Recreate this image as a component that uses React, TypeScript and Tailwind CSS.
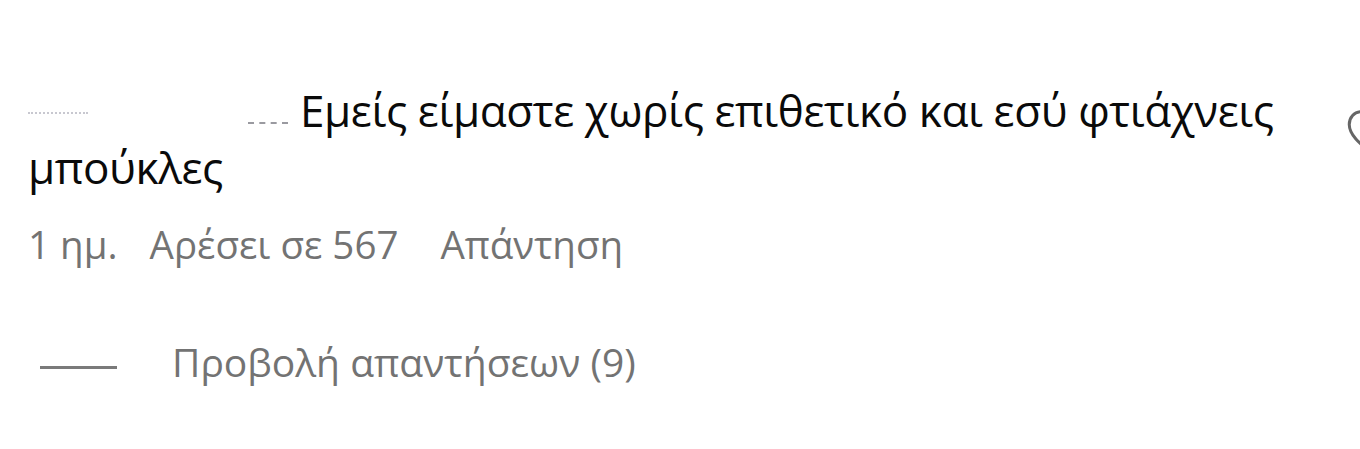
import React from "react";

export default function App() {
  return (
    <div
      className="relative w-[1360px] h-[449px] overflow-hidden bg-white"
      style={{ fontFamily: '"Open Sans", "Noto Sans", sans-serif' }}
    >
      <div className="flex items-start pt-[82px] pl-[28px]">
        <div className="flex-1">
          <div className="text-[44px] leading-[57px] text-[#0a0a0a] tracking-[-0.4px]">
            <span className="inline-flex items-baseline w-[272px] align-baseline">
              <span className="inline-block w-[60px] h-[2px] mr-[160px] border-t-2 border-dotted border-[#c8c8d0] -translate-y-[13px]" />
              <span className="inline-block w-[40px] h-[2px] border-t-2 border-dashed border-[#9a9aa0] translate-y-[-3px]" />
            </span>
            Εμείς είμαστε χωρίς επιθετικό και εσύ φτιάχνεις
            <br />
            μπούκλες
          </div>
          <div className="mt-[23px] flex items-center text-[38.5px] leading-[50px] text-[#737373]">
            <span>1 ημ.</span>
            <span className="ml-[32px]">Αρέσει σε 567</span>
            <span className="ml-[42px]">Απάντηση</span>
          </div>
          <div className="mt-[68px] flex items-center pl-[12px]">
            <span className="block w-[77px] h-[3px] bg-[#7a7a7a] translate-y-[5px]" />
            <span className="ml-[55px] text-[39px] leading-[50px] text-[#737373]">
              Προβολή απαντήσεων (9)
            </span>
          </div>
        </div>
        <div className="w-[17px] shrink-0 pt-[21px] overflow-visible">
          <svg width="60" height="60" viewBox="0 0 24 24" fill="none" stroke="#666" strokeWidth="1.2" className="block">
            <path d="M16.8 3.5c2.7 0 4.7 2.3 4.7 5.1 0 4.5-5 8.2-9.5 11.9-4.5-3.7-9.5-7.4-9.5-11.9 0-2.8 2-5.1 4.7-5.1 2 0 3.8 1 4.8 2.8 1-1.8 2.8-2.8 4.8-2.8z" />
          </svg>
        </div>
      </div>
    </div>
  );
}
